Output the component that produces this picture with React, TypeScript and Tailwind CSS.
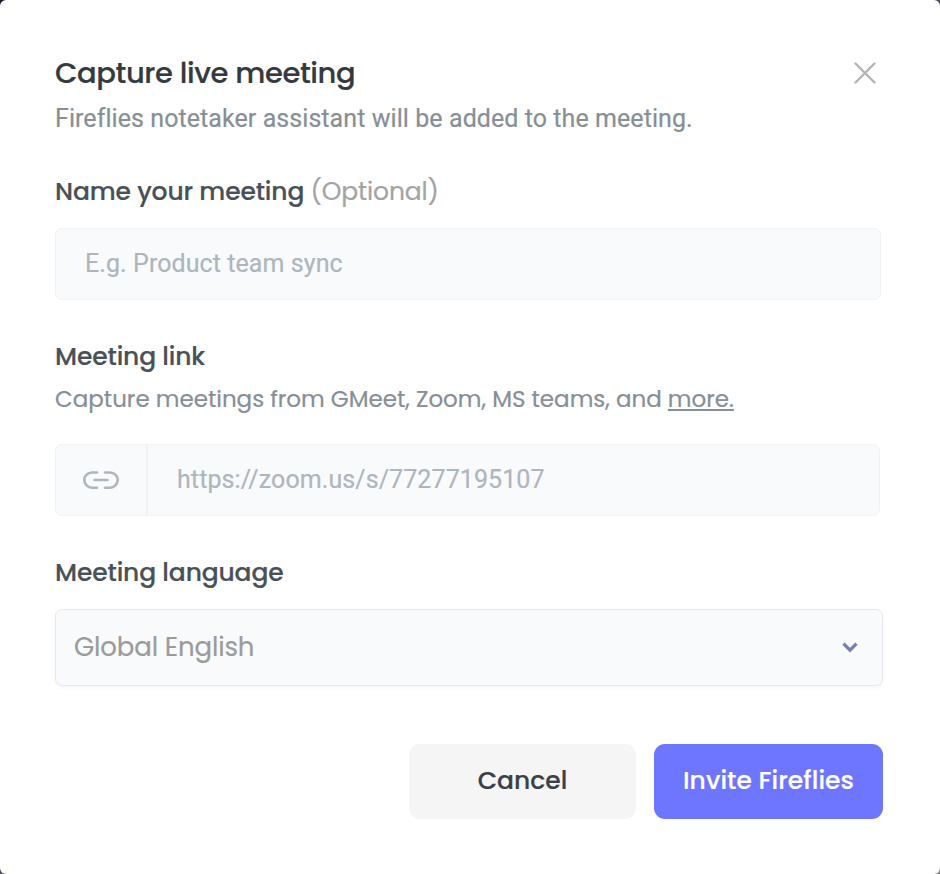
import type { ReactNode } from "react";

function Label({ children }: { children: ReactNode }) {
  return (
    <div className="h-9 leading-[38px] text-[25px] font-medium tracking-[-0.14px] text-[#495057] whitespace-nowrap">
      {children}
    </div>
  );
}

function App() {
  return (
    <div className="w-[940px] h-[874px] bg-linear-to-br from-[#15152a] to-[#8a8a8a]">
      <div className="w-full h-full bg-white rounded-[6px] pt-[52px] pl-[55px] pr-[57px] font-[Poppins,Inter,sans-serif] [-webkit-text-stroke:0.18px_currentColor]">
        <div className="flex justify-between items-center h-[42px]">
          <h1 className="text-[29px] leading-[42px] font-medium tracking-[-0.4px] text-[#343a40] whitespace-nowrap">
            Capture live meeting
          </h1>
          <button className="mr-[7px]" aria-label="Close">
            <svg width="22" height="22" viewBox="0 0 22 22" fill="none" stroke="#b1b3b5" strokeWidth="2.4" strokeLinecap="round">
              <path d="M1.5 1.5L20.5 20.5M20.5 1.5L1.5 20.5" />
            </svg>
          </button>
        </div>
        <p className="mt-1.5 h-9 leading-[38px] text-[25px] tracking-[0.07px] font-[Roboto,sans-serif] text-[#868e96] whitespace-nowrap">
          Fireflies notetaker assistant will be added to the meeting.
        </p>

        <div className="mt-[37px]">
          <Label>
            Name your meeting{" "}
            <span className="font-normal text-[#a3a3a3]">(Optional)</span>
          </Label>
        </div>
        <div className="mt-[19px] w-[826px] h-[72px] flex items-center pl-[29px] pb-px bg-[#f8fafc] border border-[#f0f1f3] rounded-[7px] font-[Roboto,sans-serif] text-[25px] tracking-[0.08px] text-[#adb5bd]">
          E.g. Product team sync
        </div>

        <div className="mt-[38px]">
          <Label>Meeting link</Label>
        </div>
        <p className="mt-[7px] h-9 leading-[37px] text-[23px] tracking-[-0.02px] text-[#868e96] whitespace-nowrap">
          Capture meetings from GMeet, Zoom, MS teams, and{" "}
          <a className="underline decoration-2 underline-offset-2">more.</a>
        </p>
        <div className="mt-[27px] w-[825px] h-[72px] flex items-center bg-[#f8fafc] border border-[#f0f1f3] rounded-[7px]">
          <div className="w-[92px] h-full flex items-center justify-center border-r-2 border-[#f0f1f3]">
            <svg width="36" height="18" viewBox="0 0 36 18" fill="none" stroke="#adb5bd" strokeWidth="2.6" strokeLinecap="round">
              <path d="M14 1.5H9C4.8 1.5 1.3 4.8 1.3 9S4.8 16.7 9 16.7H14M22 1.5H27C31.2 1.5 34.7 4.8 34.7 9S31.2 16.7 27 16.7H22M11.5 9H24.5" />
            </svg>
          </div>
          <span className="ml-[29px] pb-px font-[Roboto,sans-serif] text-[25px] tracking-[0.09px] text-[#adb5bd]">
            https://zoom.us/s/77277195107
          </span>
        </div>

        <div className="mt-[38px]">
          <Label>Meeting language</Label>
        </div>
        <div className="mt-[19px] h-[77px] flex items-center justify-between pl-[18px] pr-[24px] bg-[#f8fafc] border border-[#e5e8ec] rounded-[7px] shadow-[0_2px_4px_rgba(0,0,0,0.04)]">
          <span className="text-[26px] tracking-[-0.14px] text-[#9b9b9b]">Global English</span>
          <svg width="16" height="11" viewBox="0 0 16 11" fill="none" stroke="#757fb0" strokeWidth="3.2">
            <path d="M1.5 1.7L8 8.2L14.5 1.7" />
          </svg>
        </div>

        <div className="mt-[58px] flex justify-end gap-[18px] text-[25px] font-medium whitespace-nowrap">
          <button className="w-[227px] h-[75px] pb-px rounded-[11px] bg-[#f5f5f5] text-[#3a3f4a]">
            Cancel
          </button>
          <button className="w-[229px] h-[75px] pb-px rounded-[11px] bg-[#6e75ff] text-white tracking-[0.08px]">
            Invite Fireflies
          </button>
        </div>
      </div>
    </div>
  );
}
export default App;
